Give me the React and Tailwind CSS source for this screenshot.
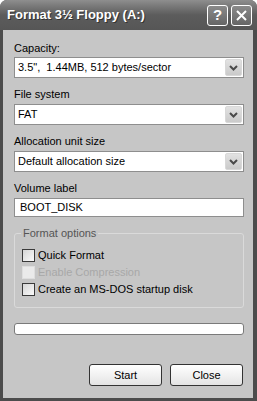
import React from "react";

const font = { fontFamily: '"Liberation Sans", Arial, sans-serif' };

function Combo({ value }) {
  return (
    <div className="flex h-[21px] items-center border border-[#8e8e8e] bg-white pl-[3px] pr-[1px]">
      <span className="flex-1 whitespace-pre text-[11px] leading-none text-black">{value}</span>
      <div className="flex h-[17px] w-[17px] items-center justify-center rounded-[2px] bg-gradient-to-b from-[#e2e2e2] to-[#cacaca] border border-[#d8d8d8]">
        <svg width="9" height="6" viewBox="0 0 9 6">
          <path d="M1 1 L4.5 4.5 L8 1" fill="none" stroke="#4a4a4a" strokeWidth="2" />
        </svg>
      </div>
    </div>
  );
}

function Check({ label, disabled }) {
  return (
    <div className="flex h-[13px] items-center gap-[3px]">
      <div
        className={
          disabled
            ? "h-[13px] w-[13px] border border-[#dedede] bg-[#eaeaea]"
            : "h-[13px] w-[13px] border border-[#3a3a3a] bg-gradient-to-br from-[#d6d6d6] to-[#fafafa]"
        }
      />
      <span className={`text-[11px] leading-none ${disabled ? "text-[#a8a8a8]" : "text-black"}`}>{label}</span>
    </div>
  );
}

export default function App() {
  return (
    <div style={font} className="h-[401px] w-[257px] overflow-hidden rounded-t-[7px] bg-[#4c4c4c] flex flex-col">
      <div className="flex h-[30px] items-center bg-gradient-to-b from-[#8e8e8e] via-[#5c5c5c] to-[#565656] pl-[7px] pr-[5px]">
        <span className="flex-1 text-[13px] font-bold text-white [text-shadow:1px_1px_0_#333]">
          Format 3½ Floppy (A:)
        </span>
        <div className="flex gap-[3px]">
          <div className="flex h-[21px] w-[21px] items-center justify-center rounded-[3px] border border-white bg-gradient-to-b from-[#8a8a8a] to-[#666] text-[15px] font-bold text-white">
            ?
          </div>
          <div className="flex h-[21px] w-[21px] items-center justify-center rounded-[3px] border border-white bg-gradient-to-b from-[#8a8a8a] to-[#666]">
            <svg width="11" height="11" viewBox="0 0 11 11">
              <path d="M1 1 L10 10 M10 1 L1 10" stroke="white" strokeWidth="2" />
            </svg>
          </div>
        </div>
      </div>

      <div className="mb-[3px] ml-[3px] mr-[4px] flex flex-1 flex-col bg-[#c6c6c6] pl-[11px] pr-[9px] pt-[11px]">
        <div className="h-[14px] text-[11px] leading-[14px] text-black">Capacity:</div>
        <div className="mt-[2px]">
          <Combo value={'3.5",  1.44MB, 512 bytes/sector'} />
        </div>
        <div className="mt-[9px] h-[14px] text-[11px] leading-[14px] text-black">File system</div>
        <div className="mt-[3px]">
          <Combo value="FAT" />
        </div>
        <div className="mt-[9px] h-[14px] text-[11px] leading-[14px] text-black">Allocation unit size</div>
        <div className="mt-[3px]">
          <Combo value="Default allocation size" />
        </div>
        <div className="mt-[9px] h-[14px] text-[11px] leading-[14px] text-black">Volume label</div>
        <div className="mt-[3px] flex h-[19px] items-center border border-[#8e8e8e] bg-white pl-[5px] text-[11px] text-black">
          BOOT_DISK
        </div>

        <div className="relative mt-[16px] h-[75px] rounded-[3px] border border-[#dadada] pl-[7px] pt-[15px]">
          <span className="absolute -top-[7px] left-[6px] bg-[#c6c6c6] px-[2px] text-[11px] leading-[13px] text-[#555]">
            Format options
          </span>
          <div className="flex flex-col gap-[4px]">
            <Check label="Quick Format" />
            <Check label="Enable Compression" disabled />
            <Check label="Create an MS-DOS startup disk" />
          </div>
        </div>

        <div className="mt-[15px] h-[12px] rounded-[3px] border border-[#7a7a7a] bg-white" />

        <div className="mt-[29px] flex justify-end gap-[8px] pr-[1px]">
          <div className="flex h-[22px] w-[73px] items-center justify-center rounded-[3px] border border-[#333] bg-gradient-to-b from-white to-[#e4e4e4] text-[11px] text-black">
            Start
          </div>
          <div className="flex h-[22px] w-[73px] items-center justify-center rounded-[3px] border border-[#333] bg-gradient-to-b from-white to-[#e4e4e4] text-[11px] text-black">
            Close
          </div>
        </div>
      </div>
    </div>
  );
}
